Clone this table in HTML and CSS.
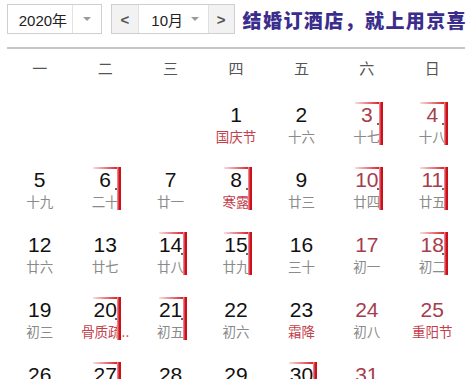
FILE: index.html
```html
<!DOCTYPE html>
<html lang="zh">
<head>
<meta charset="utf-8">
<link rel="stylesheet" href="styles.css">
</head>
<body>
<div class="toolbar">
  <div class="select year">
    <span class="val">2020年</span>
    <span class="arrow"><i class="tri"></i></span>
  </div>
  <div class="select month">
    <span class="nav">&lt;</span>
    <span class="mval">10月 <i class="tri"></i></span>
    <span class="nav next">&gt;</span>
  </div>
  <div class="ad">结婚订酒店，就上用京喜</div>
</div>
<div class="rule"></div>
<div class="weekdays">
  <span>一</span><span>二</span><span>三</span><span>四</span><span>五</span><span>六</span><span>日</span>
</div>
<div class="days">
  <div class="cell"></div><div class="cell"></div><div class="cell"></div>
  <div class="cell"><b class="num">1</b><span class="lunar fest">国庆节</span></div>
  <div class="cell"><b class="num">2</b><span class="lunar">十六</span></div>
  <div class="cell we mk"><b class="num">3</b><span class="lunar">十七</span><i class="mark"></i><i class="dot"></i></div>
  <div class="cell we mk"><b class="num">4</b><span class="lunar">十八</span><i class="mark"></i><i class="dot"></i></div>

  <div class="cell"><b class="num">5</b><span class="lunar">十九</span></div>
  <div class="cell mk"><b class="num">6</b><span class="lunar">二十</span><i class="mark"></i><i class="dot"></i></div>
  <div class="cell"><b class="num">7</b><span class="lunar">廿一</span></div>
  <div class="cell mk"><b class="num">8</b><span class="lunar fest">寒露</span><i class="mark"></i><i class="dot"></i></div>
  <div class="cell"><b class="num">9</b><span class="lunar">廿三</span></div>
  <div class="cell we mk"><b class="num">10</b><span class="lunar">廿四</span><i class="mark"></i><i class="dot"></i></div>
  <div class="cell we mk"><b class="num">11</b><span class="lunar">廿五</span><i class="mark"></i><i class="dot"></i></div>

  <div class="cell"><b class="num">12</b><span class="lunar">廿六</span></div>
  <div class="cell"><b class="num">13</b><span class="lunar">廿七</span></div>
  <div class="cell mk"><b class="num">14</b><span class="lunar">廿八</span><i class="mark"></i><i class="dot"></i></div>
  <div class="cell mk"><b class="num">15</b><span class="lunar">廿九</span><i class="mark"></i><i class="dot"></i></div>
  <div class="cell"><b class="num">16</b><span class="lunar">三十</span></div>
  <div class="cell we"><b class="num">17</b><span class="lunar">初一</span></div>
  <div class="cell we mk"><b class="num">18</b><span class="lunar">初二</span><i class="mark"></i><i class="dot"></i></div>

  <div class="cell"><b class="num">19</b><span class="lunar">初三</span></div>
  <div class="cell mk"><b class="num">20</b><span class="lunar fest">骨质疏..</span><i class="mark"></i><i class="dot"></i></div>
  <div class="cell mk"><b class="num">21</b><span class="lunar">初五</span><i class="mark"></i><i class="dot"></i></div>
  <div class="cell"><b class="num">22</b><span class="lunar">初六</span></div>
  <div class="cell"><b class="num">23</b><span class="lunar fest">霜降</span></div>
  <div class="cell we"><b class="num">24</b><span class="lunar">初八</span></div>
  <div class="cell we"><b class="num">25</b><span class="lunar fest">重阳节</span></div>

  <div class="cell"><b class="num">26</b><span class="lunar">初十</span></div>
  <div class="cell mk"><b class="num">27</b><span class="lunar">十一</span><i class="mark"></i></div>
  <div class="cell"><b class="num">28</b><span class="lunar">十二</span></div>
  <div class="cell"><b class="num">29</b><span class="lunar">十三</span></div>
  <div class="cell mk"><b class="num">30</b><span class="lunar">十四</span><i class="mark"></i></div>
  <div class="cell we"><b class="num">31</b><span class="lunar">十五</span></div>
  <div class="cell"></div>
</div>
</body>
</html>
```
FILE: styles.css
```css
* { box-sizing: border-box; }
html, body { margin: 0; padding: 0; background: #fff; overflow: hidden; }
body {
  width: 475px;
  height: 379px;
  font-family: "Liberation Sans", "Noto Sans CJK SC", sans-serif;
  color: #222;
}
.toolbar {
  display: flex;
  align-items: center;
  padding: 4px 8px 0 7px;
  height: 34px;
}
.select {
  display: flex;
  height: 30px;
  border: 1px solid #cfcfcf;
  font-size: 15px;
  color: #222;
}
.year { width: 95px; }
.year .val {
  flex: 1;
  display: flex;
  align-items: center;
  justify-content: center;
  padding-left: 6px;
}
.year .arrow {
  width: 29px;
  border-left: 1px solid #e2e2e2;
  display: flex;
  align-items: center;
  justify-content: center;
}
.tri {
  display: inline-block;
  width: 0;
  height: 0;
  border-left: 4px solid transparent;
  border-right: 4px solid transparent;
  border-top: 4px solid #9a9a9a;
}
.month { width: 124px; margin-left: 9px; }
.nav {
  width: 27px;
  background: #f2f2f2;
  display: flex;
  align-items: center;
  justify-content: center;
  color: #555;
  font-weight: bold;
  font-size: 15px;
  border-right: 1px solid #e0e0e0;
}
.nav.next { border-right: 0; border-left: 1px solid #e0e0e0; width: 26px; }
.mval {
  flex: 1;
  display: flex;
  align-items: center;
  justify-content: center;
  gap: 8px;
  padding-left: 4px;
}
.ad {
  margin-left: 8px;
  font-family: "Noto Sans CJK SC", sans-serif;
  font-weight: 900;
  font-size: 19px;
  letter-spacing: 1.4px;
  color: #3a2d8c;
  white-space: nowrap;
  line-height: 30px;
  padding-top: 1px;
}
.rule {
  margin: 13px 10px 0 7px;
  height: 2px;
  background: #c6c6c6;
}
.weekdays {
  display: grid;
  grid-template-columns: repeat(7, 1fr);
  padding: 9px 10px 0 7px;
  height: 45px;
  font-family: "Noto Sans CJK SC", sans-serif;
  font-size: 15px;
  line-height: 20px;
  color: #555;
  text-align: center;
}
.days {
  display: grid;
  grid-template-columns: repeat(7, 1fr);
  grid-auto-rows: 65px;
  padding: 0 10px 0 7px;
}
.cell {
  position: relative;
  display: flex;
  flex-direction: column;
  align-items: center;
  padding-top: 8px;
}
.num {
  font-weight: normal;
  font-size: 21px;
  line-height: 25px;
  color: #111;
}
.we .num { color: #a63d4c; }
.lunar {
  font-family: "Noto Sans CJK SC", sans-serif;
  font-size: 13.5px;
  line-height: 18px;
  color: #8a8a8a;
  white-space: nowrap;
}
.lunar.fest { color: #c4404c; }
.mark {
  position: absolute;
  top: 8px;
  left: calc(50% - 12px);
  width: 28px;
  height: 43px;
}
.mark::before {
  content: "";
  position: absolute;
  top: 0;
  left: 0;
  right: 2px;
  height: 2px;
  background: linear-gradient(to right, rgba(214, 30, 40, 0.15), #d8161f);
}
.mark::after {
  content: "";
  position: absolute;
  top: 0;
  right: 0;
  width: 4px;
  height: 100%;
  background: linear-gradient(to right, #f1a0a4, #cc0f18 60%);
}
.dot {
  position: absolute;
  top: 29px;
  left: calc(50% + 10px);
  width: 2px;
  height: 2px;
  border-radius: 50%;
  background: #333;
}
```
